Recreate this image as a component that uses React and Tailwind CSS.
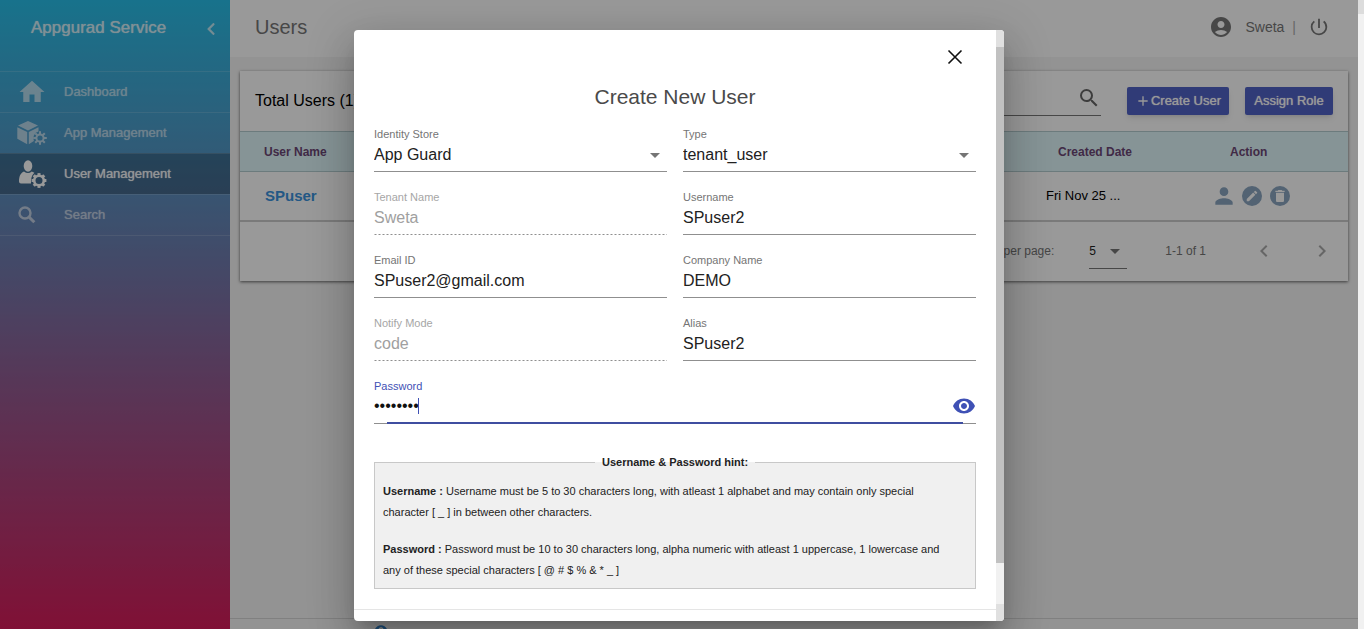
import { useState } from "react";
import {
  MdHome, MdSearch, MdAccountCircle, MdPowerSettingsNew, MdPerson, MdEdit, MdDelete,
  MdChevronLeft, MdChevronRight, MdVisibility, MdAdd, MdArrowDropDown, MdHelp,
} from "react-icons/md";
import { FaChevronLeft } from "react-icons/fa";

const toothAngles = [0, 45, 90, 135, 180, 225, 270, 315];

function AppIcon() {
  return (
    <svg viewBox="0 0 30 26" className="h-[26px] w-[30px]" fill="currentColor" aria-hidden="true">
      <path d="M11 1 21 5.6 11 10.4 1 5.6Z" />
      <path d="M0.3 7.2 10.2 12V24.3L0.3 18.8Z" />
      <path d="M11.8 12 21.5 7.2V11.4a7 7 0 0 0-4.6 9.6L11.8 24.3Z" />
      <g transform="translate(16 11)">
        <circle cx="7" cy="7" r="3.6" fill="none" stroke="currentColor" strokeWidth="2" />
        {toothAngles.map((a) => (
          <rect key={a} x="6" y="0.2" width="2" height="3" transform={`rotate(${a} 7 7)`} />
        ))}
      </g>
    </svg>
  );
}

function UserGearIcon() {
  return (
    <svg viewBox="1 0 30 30" className="h-[30px] w-[30px]" fill="currentColor" aria-hidden="true">
      <ellipse cx="12" cy="7" rx="4.3" ry="5.8" />
      <path d="M8 12.4Q12 15.6 15.8 12.4L18.4 13.8Q14.4 17.5 15 24.5H5Q3 24.5 3 22.5C3 16.5 5 13.6 8 12.4Z" />
      <g transform="translate(15 13.5)">
        <circle cx="8" cy="8" r="4.8" fill="none" stroke="currentColor" strokeWidth="2.6" />
        {toothAngles.map((a) => (
          <rect key={a} x="6.5" y="0.6" width="3" height="2.6" transform={`rotate(${a} 8 8)`} />
        ))}
      </g>
    </svg>
  );
}

function BoldSearchIcon() {
  return (
    <svg viewBox="0 0 20 20" className="size-5" fill="none" stroke="currentColor" aria-hidden="true">
      <circle cx="8" cy="8" r="5.5" strokeWidth="2.4" />
      <path d="M12 12 17.3 17.3" strokeWidth="3" />
    </svg>
  );
}

function CloseIcon() {
  return (
    <svg viewBox="0 0 24 24" className="size-6" fill="none" stroke="currentColor" strokeWidth="1.6" aria-hidden="true">
      <path d="M5.5 5.5 18.5 18.5M18.5 5.5 5.5 18.5" />
    </svg>
  );
}

const navItems = [
  { label: "Dashboard", icon: <MdHome className="size-[30px]" /> },
  { label: "App Management", icon: <AppIcon /> },
  { label: "User Management", icon: <UserGearIcon />, active: true },
  { label: "Search", icon: <BoldSearchIcon /> },
];

function Sidebar() {
  return (
    <aside className="flex w-[230px] shrink-0 flex-col bg-linear-to-b/srgb from-[#28bfe9] to-[#d61c5a] text-white">
      <div className="flex h-[71px] items-start justify-between pt-4 pr-3 pl-[31px]">
        <span className="text-[17px] leading-6 opacity-80 [text-shadow:0_0_1px_currentColor]">Appgurad Service</span>
        <button type="button" aria-label="Collapse menu" className="flex h-[26px] items-center opacity-70">
          <FaChevronLeft className="size-[14px]" />
        </button>
      </div>
      <nav>
        {navItems.map((n) => (
          <a
            key={n.label}
            href="#"
            className={`flex h-[41px] items-center border-t border-white/15 pl-[17px] text-[13px] [text-shadow:0_0_1px_currentColor] ${n.active ? "bg-black/25" : ""}`}
          >
            <span className={`flex w-[47px] items-center ${n.active ? "" : "opacity-60"}`}>{n.icon}</span>
            <span className={n.active ? "opacity-95" : "opacity-60"}>{n.label}</span>
          </a>
        ))}
        <div className="border-t border-white/15" />
      </nav>
    </aside>
  );
}

function Page() {
  return (
    <main className="flex min-w-0 flex-1 flex-col overflow-hidden bg-[#f5f5f5]">
      <header className="flex h-[57px] shrink-0 items-center justify-between bg-white pr-7 pb-1 pl-[25px] text-[#777]">
        <h1 className="text-xl">Users</h1>
        <div className="flex items-center text-sm">
          <MdAccountCircle className="mr-3 size-6" />
          <span>Sweta</span>
          <span className="mr-3 ml-2 text-[#aaa]">|</span>
          <MdPowerSettingsNew className="size-[22px]" />
        </div>
      </header>
      <section className="mx-[10px] mt-[14px] bg-white shadow-[0_1px_3px_rgba(0,0,0,0.6)]">
        <div className="flex h-[60px] items-center justify-end gap-4 px-[15px]">
          <h2 className="mr-auto text-base">Total Users (1)</h2>
          <div className="mr-[10px] flex h-[30px] w-60 items-start border-b border-[#777] text-[#666]">
            <input aria-label="Search users" className="min-w-0 flex-1 bg-transparent outline-none" />
            <MdSearch className="size-6" />
          </div>
          <button type="button" className="flex h-7 items-center rounded-xs bg-[#5163c6] px-2 text-[13px] text-white shadow-md [text-shadow:0_0_1px_currentColor]">
            <MdAdd className="size-4" />Create User
          </button>
          <button type="button" className="h-7 w-[88px] rounded-xs bg-[#5163c6] text-[13px] text-white shadow-md [text-shadow:0_0_1px_currentColor]">
            Assign Role
          </button>
        </div>
        <table className="w-full table-fixed text-left text-[13px]">
          <thead>
            <tr className="h-10 border-y border-[#b5cdd0] bg-[#e0f7fa] text-xs text-[#6c4675]">
              <th className="pl-6">User Name</th>
              <th className="w-[184px] pl-3">Created Date</th>
              <th className="w-[118px]">Action</th>
            </tr>
          </thead>
          <tbody>
            <tr className="h-[49px] border-b-2 border-[#ccc]">
              <td className="pl-[25px] text-[15px] font-bold text-[#3b93de]">SPuser</td>
              <td>Fri Nov 25 ...</td>
              <td>
                <div className="-ml-5 flex items-center text-[#8aa5c0]">
                  <button type="button" aria-label="View user" className="flex size-7 items-center justify-center">
                    <MdPerson className="size-[26px] shrink-0" />
                  </button>
                  <button type="button" aria-label="Edit user" className="flex size-7 items-center justify-center">
                    <span className="flex size-5 items-center justify-center rounded-full bg-[#8aa5c0] text-white">
                      <MdEdit className="size-[14px]" />
                    </span>
                  </button>
                  <button type="button" aria-label="Delete user" className="flex size-7 items-center justify-center">
                    <span className="flex size-5 items-center justify-center rounded-full bg-[#8aa5c0] text-white">
                      <MdDelete className="size-4" />
                    </span>
                  </button>
                </div>
              </td>
            </tr>
          </tbody>
        </table>
        <div className="flex h-[59px] items-center justify-end pr-1.5 text-xs text-[#757575]">
          <label htmlFor="page-size" className="mr-[35px]">Items per page:</label>
          <div className="relative mr-[38px] h-9 w-[38px] border-b border-[#777]">
            <select id="page-size" className="h-full w-full appearance-none text-[#222] outline-none">
              <option>5</option>
            </select>
            <MdArrowDropDown className="pointer-events-none absolute top-1.5 right-0 size-6" />
          </div>
          <span className="mr-[38px]">1-1 of 1</span>
          <button type="button" aria-label="Previous page" className="mr-[18px] flex w-10 justify-center text-[#aaa]">
            <MdChevronLeft className="size-6" />
          </button>
          <button type="button" aria-label="Next page" className="flex w-10 justify-center text-[#aaa]">
            <MdChevronRight className="size-6" />
          </button>
        </div>
      </section>
      <footer className="mt-auto h-[11px] shrink-0 overflow-hidden border-t border-[#d5d5d5] pt-[5px] pl-[143px]">
        <MdHelp className="size-4 text-[#2f80c8]" />
      </footer>
    </main>
  );
}

function Field({ id, label, value, options, disabled }) {
  return (
    <div className="flex flex-col">
      <label htmlFor={id} className={`h-[14px] text-[11px] leading-[14px] ${disabled ? "text-[#a6a6a6]" : "text-[#757575]"}`}>
        {label}
      </label>
      <div
        className={`relative ${
          disabled
            ? "bg-[linear-gradient(to_right,#8f8f8f_50%,transparent_50%)] bg-size-[4px_1px] bg-bottom bg-repeat-x pb-[3px]"
            : "border-b border-[#8f8f8f] pb-0.5"
        }`}
      >
        {options ? (
          <>
            <select id={id} defaultValue={value} className="block h-7 w-full appearance-none text-base text-[#212121] outline-none">
              {options.map((o) => <option key={o}>{o}</option>)}
            </select>
            <MdArrowDropDown className="pointer-events-none absolute top-0.5 right-0 size-6 text-[#757575]" />
          </>
        ) : (
          <input
            id={id}
            defaultValue={value}
            disabled={disabled}
            className="block h-7 w-full bg-transparent text-base text-[#212121] outline-none disabled:text-[#a0a0a0]"
          />
        )}
      </div>
    </div>
  );
}

function PasswordField() {
  const [visible, setVisible] = useState(false);
  return (
    <div className="col-span-2 flex flex-col">
      <label htmlFor="password" className="h-[14px] text-[11px] leading-[14px] text-[#3f51b5]">Password</label>
      <div className="relative flex h-[31px] border-b border-[#8f8f8f] pb-1 after:absolute after:inset-x-[13px] after:-bottom-px after:h-0.5 after:bg-[#3f4da0]">
        <input
          id="password"
          type={visible ? "text" : "password"}
          defaultValue="password"
          className="h-[26px] min-w-0 flex-1 bg-transparent text-base text-[#111] caret-transparent outline-none"
        />
        <span className="absolute top-[5px] left-11 h-4 w-px bg-[#3f51b5]" />
        <button type="button" aria-label="Show password" onClick={() => setVisible(!visible)} className="flex h-[26px] items-center text-[#3f51b5]">
          <MdVisibility className="size-6" />
        </button>
      </div>
    </div>
  );
}

function Dialog() {
  return (
    <div role="dialog" aria-modal="true" aria-labelledby="dialog-title" className="flex w-full max-w-[650px] overflow-hidden rounded-sm bg-white shadow-[0_11px_15px_-7px_rgba(0,0,0,0.2),0_24px_38px_3px_rgba(0,0,0,0.14),0_9px_46px_8px_rgba(0,0,0,0.12)]">
      <div className="min-w-0 flex-1 overflow-hidden pt-[15px]">
        <form className="px-5">
          <div className="mb-[14px] flex justify-end pr-[9px]">
            <button type="button" aria-label="Close" className="text-[#111]"><CloseIcon /></button>
          </div>
          <h2 id="dialog-title" className="mb-4 text-center text-[21px] leading-7 text-[#4a4a4a]">Create New User</h2>
          <div className="grid grid-cols-2 gap-x-4 gap-y-[18px]">
            <Field id="store" label="Identity Store" value="App Guard" options={["App Guard"]} />
            <Field id="type" label="Type" value="tenant_user" options={["tenant_user"]} />
            <Field id="tenant" label="Tenant Name" value="Sweta" disabled />
            <Field id="username" label="Username" value="SPuser2" />
            <Field id="email" label="Email ID" value="SPuser2@gmail.com" />
            <Field id="company" label="Company Name" value="DEMO" />
            <Field id="notify" label="Notify Mode" value="code" disabled />
            <Field id="alias" label="Alias" value="SPuser2" />
            <PasswordField />
          </div>
          <fieldset className="mt-8 mb-5 min-w-0 border border-[#c8c8c8] bg-[#f0f0f0] px-2 pt-[13px] pb-[7px] text-[11px] leading-[21px] text-[#222]">
            <legend className="mx-auto px-[7px] leading-3 font-bold">Username &amp; Password hint:</legend>
            <p className="mb-4 pr-3">
              <b>Username :</b> Username must be 5 to 30 characters long, with atleast 1 alphabet and may contain only special character [ _ ] in between other characters.
            </p>
            <p className="pr-3">
              <b>Password :</b> Password must be 10 to 30 characters long, alpha numeric with atleast 1 uppercase, 1 lowercase and any of these special characters [ @ # $ % &amp; * _ ]
            </p>
          </fieldset>
        </form>
        <div className="border-t border-[#e5e5e5]" />
      </div>
      <div aria-hidden="true" className="flex w-2 shrink-0 flex-col bg-[#f1f1f1]">
        <div className="h-[17px] bg-[#e0e0e0]" />
        <div className="mb-[41px] flex-1 bg-[#c1c1c1]" />
        <div className="h-[17px] bg-[#e0e0e0]" />
      </div>
    </div>
  );
}

export default function App() {
  return (
    <div className="flex h-screen overflow-hidden font-['Liberation_Sans',Arial,sans-serif]">
      <div className="relative flex min-w-0 flex-1">
        <Sidebar />
        <Page />
        <div className="absolute inset-0 flex justify-center bg-black/40 pt-[30px] pb-2">
          <Dialog />
        </div>
      </div>
      <div aria-hidden="true" className="w-1.5 shrink-0 bg-[#f1f1f1]">
        <div className="h-[14px] bg-[#dcdcdc]" />
      </div>
    </div>
  );
}
